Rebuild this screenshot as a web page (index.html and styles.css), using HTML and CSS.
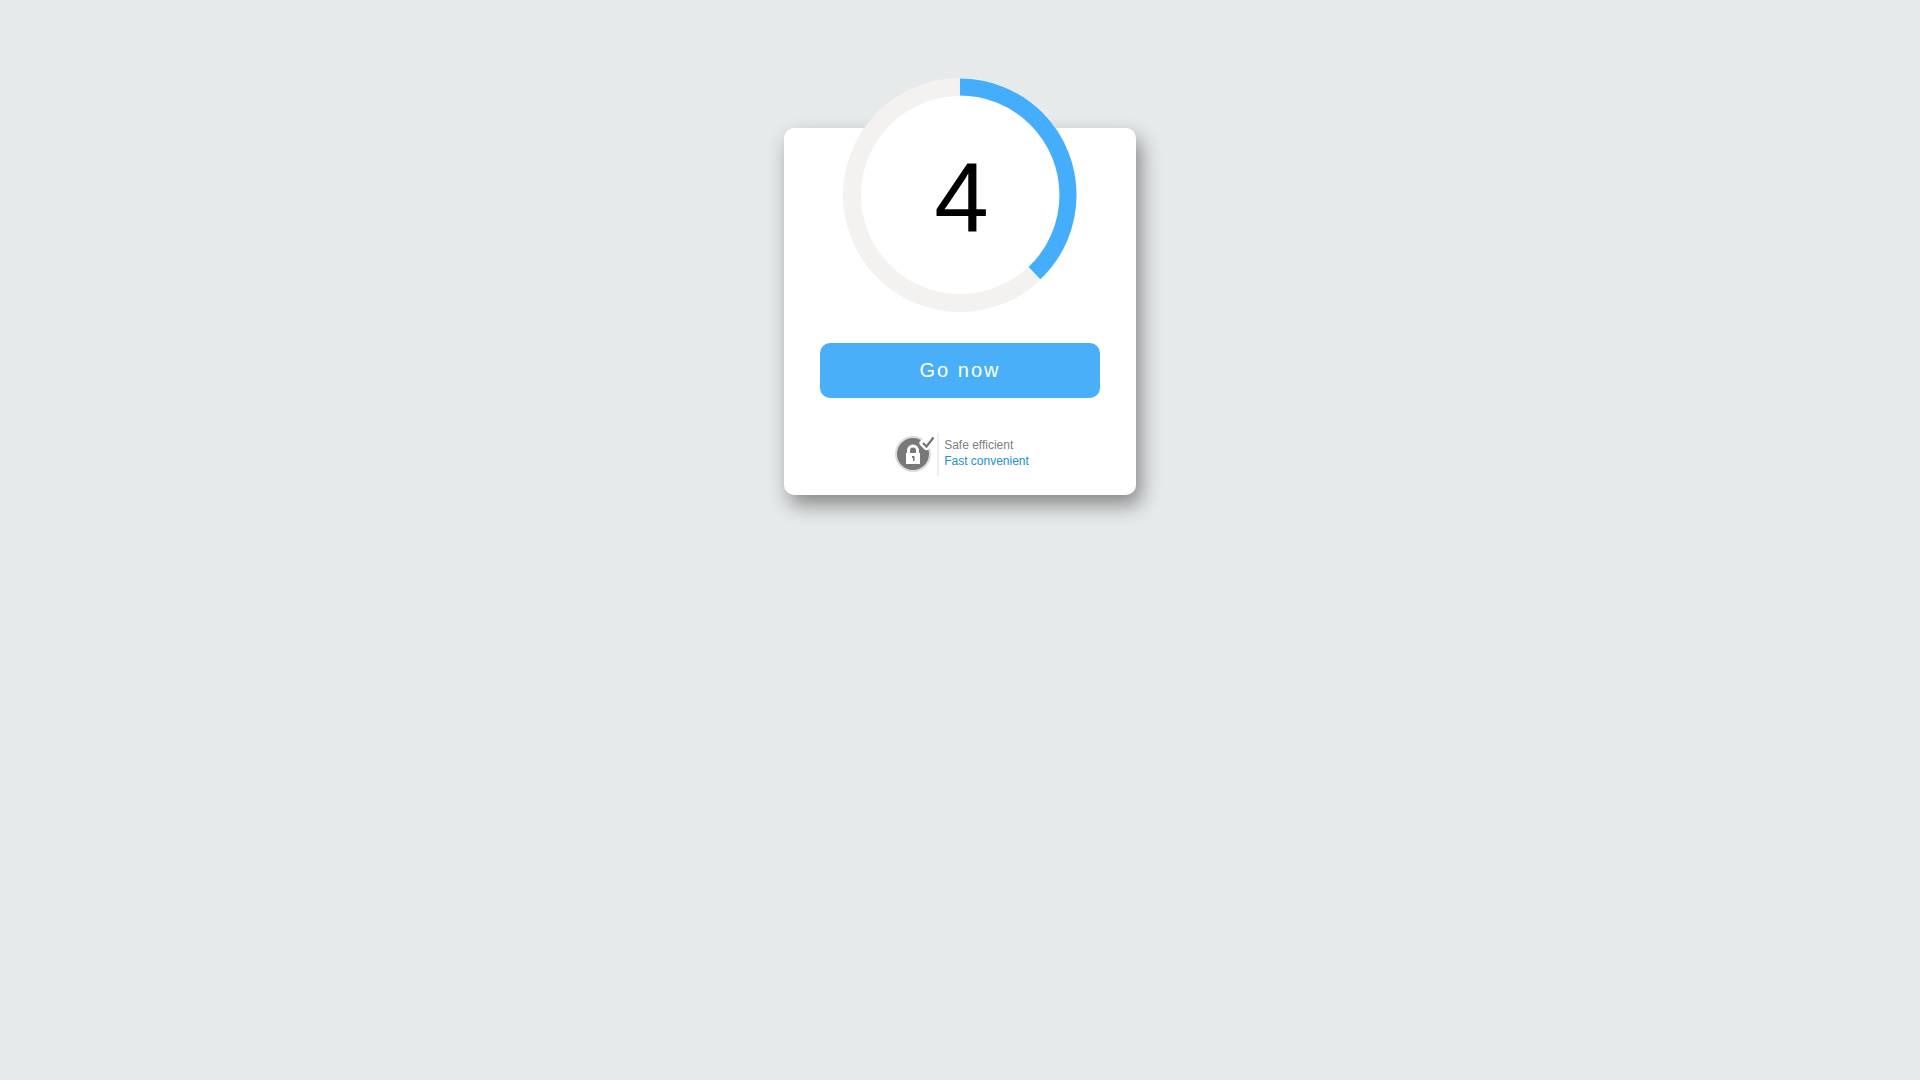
FILE: index.html
```html
<!DOCTYPE html>
<html lang="en">
<head>
<meta charset="utf-8">
<meta name="viewport" content="width=device-width, initial-scale=1">
<title>Go now</title>
<link rel="stylesheet" href="styles.css">
</head>
<body>
<main class="card">
  <div class="timer">
    <svg class="timer-ring" viewBox="0 0 234 234" aria-hidden="true">
      <circle cx="117" cy="117" r="116" fill="#fff"/>
      <circle cx="117" cy="117" r="108" fill="none" stroke="#f3f2f1" stroke-width="18"/>
      <circle cx="117" cy="117" r="108" fill="none" stroke="#44aefc" stroke-width="17" pathLength="360" stroke-dasharray="136.4 360" transform="rotate(-90 117 117)"/>
    </svg>
    <span class="timer-value">4</span>
  </div>
  <button class="go" type="button">Go now</button>
  <div class="trust">
    <svg class="trust-icon" viewBox="0 0 40 40" aria-hidden="true">
      <circle cx="18" cy="21" r="17" fill="#787878" stroke="#dcdcdc" stroke-width="2"/>
      <path d="M28 10 L31.500 13.500 L40 3" fill="none" stroke="#fff" stroke-width="7" stroke-linecap="round" stroke-linejoin="round"/>
      <path d="M28 10 L31.500 13.500 L38.500 4.500" fill="none" stroke="#787878" stroke-width="2.400"/>
      <path d="M13.500 21 V17.500 a4.500 4.500 0 0 1 9 0 V21" fill="none" stroke="#fff" stroke-width="3"/>
      <rect x="11" y="20" width="14" height="11" fill="#fff"/>
      <path d="M17 23 h2.500 v5 h-1.500 v-3 h-1z" fill="#787878"/>
    </svg>
    <div class="trust-text">
      <span class="trust-safe">Safe efficient</span>
      <span class="trust-fast">Fast convenient</span>
    </div>
  </div>
</main>
</body>
</html>
```
FILE: styles.css
```css
* {
  box-sizing: border-box;
}

body {
  margin: 0;
  min-height: 100vh;
  background: #e6eaeb;
  font-family: "Liberation Sans", Arial, sans-serif;
}

.card {
  display: flex;
  flex-direction: column;
  align-items: center;
  width: 90%;
  max-width: 352px;
  margin: 128px auto 0;
  padding: 0 36px 19px;
  border-radius: 10px;
  background: #fff;
  box-shadow: 5px 10px 20px #888;
}

.timer {
  display: grid;
  place-items: center;
  width: 234px;
  margin-top: -50px;
}

.timer-ring,
.timer-value {
  grid-area: 1 / 1;
}

.timer-ring {
  display: block;
  width: 100%;
}

.timer-value {
  padding: 4px 0 0 3px;
  color: #000;
  font-size: 98px;
  line-height: 120px;
}

.go {
  width: 100%;
  height: 55px;
  margin-top: 31px;
  border: 0;
  border-radius: 10px;
  background: #4aaff9;
  color: #fff;
  font: inherit;
  font-size: 20px;
  letter-spacing: 2px;
  cursor: pointer;
}

.trust {
  display: flex;
  align-items: flex-start;
  gap: 2px;
  margin-top: 35px;
  padding-left: 4px;
}

.trust-icon {
  width: 40px;
  height: 40px;
}

.trust-text {
  display: flex;
  flex-direction: column;
  height: 43px;
  padding: 4px 0 0 5px;
  border-left: 2px solid #eee;
  font-size: 12px;
  line-height: 16px;
}

.trust-safe {
  color: #808080;
}

.trust-fast {
  color: #1b8fd2;
}
```
